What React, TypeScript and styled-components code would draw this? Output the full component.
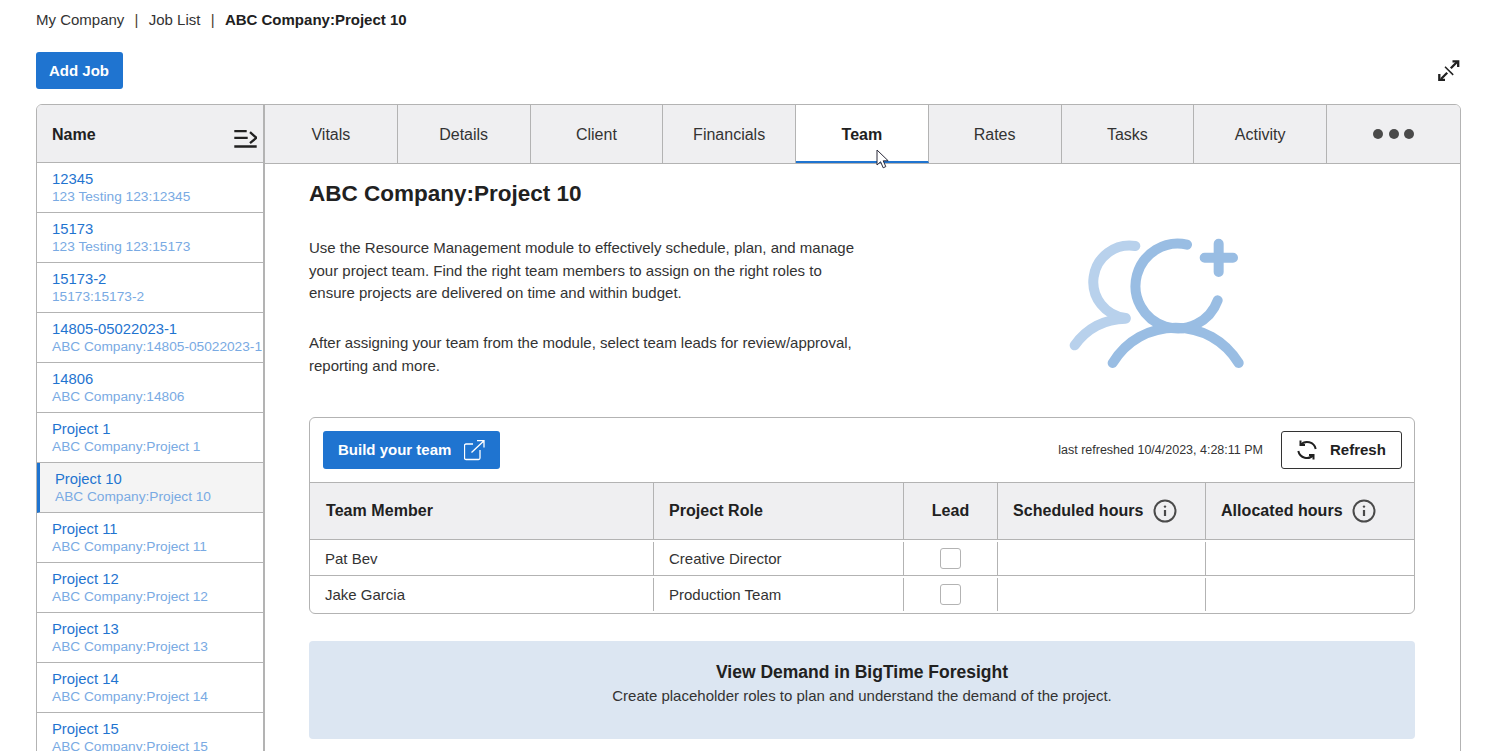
import * as React from 'react';
import styled, { createGlobalStyle } from 'styled-components';

const GlobalStyle = createGlobalStyle`
  html, body {
    margin: 0;
    padding: 0;
    background: #fff;
    overflow: hidden;
  }
  body {
    font-family: "Liberation Sans", Arial, sans-serif;
    color: #212121;
  }
`;

const Page = styled.div`
  width: 1500px;
  height: 751px;
  overflow: hidden;
  padding: 0 39px 0 36px;
  box-sizing: border-box;
`;

const Breadcrumbs = styled.div`
  height: 52px;
  padding-top: 11px;
  box-sizing: border-box;
  font-size: 15px;
  line-height: 18px;
  display: flex;
  color: #333;
`;

const Crumb = styled.span<{ $current?: boolean }>`
  font-weight: ${p => (p.$current ? 700 : 400)};
  color: ${p => (p.$current ? '#212121' : '#333')};
`;

const CrumbDivider = styled.span`
  margin: 0 10.250px;
  color: #4a4030;
`;

const ActionBar = styled.div`
  height: 52px;
  display: flex;
  justify-content: space-between;
  align-items: flex-start;
`;

const PrimaryButton = styled.button`
  height: 37px;
  padding: 0 14px 0 13px;
  display: flex;
  align-items: center;
  background: #1f74d0;
  border: 0;
  border-radius: 3px;
  color: #fff;
  font-family: inherit;
  font-size: 15px;
  font-weight: 700;
`;

const ExpandButton = styled.div`
  width: 24px;
  height: 24px;
  margin: 7px 0 0;
`;

const Panel = styled.div`
  width: 1425px;
  height: 760px;
  box-sizing: border-box;
  display: flex;
  border: 1px solid #b3b3b3;
  border-radius: 6px;
  overflow: hidden;
`;

const Sidebar = styled.div`
  width: 228px;
  flex: none;
  border-right: 2px solid #b3b3b3;
  box-sizing: border-box;
`;

const SidebarHead = styled.div`
  height: 58px;
  padding: 2px 6px 0 15px;
  box-sizing: border-box;
  display: flex;
  justify-content: space-between;
  align-items: center;
  background: #efeff1;
  border-bottom: 1px solid #b3b3b3;
  font-size: 16px;
  font-weight: 700;
`;

const CollapseIcon = styled.svg`
  margin-top: 8px;
`;

const JobRow = styled.div<{ $selected?: boolean }>`
  height: 50px;
  box-sizing: border-box;
  padding: 8px 0 0 15px;
  border-bottom: 1px solid #b3b3b3;
  border-left: ${p => (p.$selected ? '3px solid #1f74d0' : '0')};
  background: ${p => (p.$selected ? '#f4f4f4' : '#fff')};
  white-space: nowrap;
  overflow: hidden;
`;

const JobName = styled.div`
  color: #1f74d0;
  font-size: 14.800px;
  line-height: 17px;
`;

const JobPath = styled.div`
  color: #79aae3;
  font-size: 13.700px;
  line-height: 17px;
`;

const Main = styled.div`
  flex: 1;
  min-width: 0;
  position: relative;
`;

const Tabs = styled.div`
  height: 59px;
  display: flex;
  box-sizing: border-box;
  border-bottom: 1px solid #b3b3b3;
  background: #efeff1;
`;

const Tab = styled.div<{ $active?: boolean }>`
  flex: 0 0 132.750px;
  box-sizing: border-box;
  padding-top: 2px;
  display: flex;
  align-items: center;
  justify-content: center;
  border-right: 1px solid #b3b3b3;
  font-size: 16px;
  color: #333;
  &:last-child {
    flex: 1;
    border-right: 0;
    padding-top: 0;
  }
  ${p =>
    p.$active &&
    `
    background: #fff;
    color: #212121;
    font-weight: 700;
    border-bottom: 2px solid #1f74d0;
    padding-top: 4px;
  `}
`;

const Dot = styled.span`
  width: 10px;
  height: 10px;
  margin: 0 2.600px;
  border-radius: 50%;
  background: #4a4a4a;
`;

const Cursor = styled.svg`
  position: absolute;
  left: 611px;
  top: 44px;
`;

const Content = styled.div`
  padding: 14px 45px 0 44px;
`;

const Title = styled.h1`
  margin: 0;
  font-size: 22.500px;
  line-height: 31px;
  font-weight: 700;
  color: #212121;
`;

const Intro = styled.div`
  margin-top: 28px;
  display: flex;
  align-items: flex-start;
`;

const IntroText = styled.div`
  width: 555px;
  flex: none;
`;

const Paragraph = styled.p`
  margin: 0 0 27.500px;
  font-size: 15px;
  line-height: 22.500px;
  color: #333;
  &:last-child {
    margin-bottom: 0;
  }
`;

const Illustration = styled.svg`
  flex: none;
  margin-left: 204px;
`;

const TeamCard = styled.div`
  margin-top: 40px;
  border: 1px solid #b3b3b3;
  border-radius: 6px;
  overflow: hidden;
`;

const Toolbar = styled.div`
  height: 65px;
  box-sizing: border-box;
  padding: 0 12px 0 13px;
  display: flex;
  align-items: center;
  border-bottom: 1px solid #b3b3b3;
`;

const BuildLabel = styled.span`
  margin-bottom: 1px;
`;

const BuildButton = styled(PrimaryButton)`
  height: 38px;
  padding: 0 15px;
  gap: 13px;
`;

const RefreshedAt = styled.span`
  margin-left: auto;
  font-size: 12.500px;
  color: #333;
`;

const RefreshButton = styled.button`
  margin-left: 18px;
  width: 121px;
  height: 38px;
  padding: 0 0 0 15px;
  box-sizing: border-box;
  display: flex;
  align-items: center;
  gap: 13px;
  background: #fff;
  border: 1px solid #333;
  border-radius: 3px;
  color: #212121;
  font-family: inherit;
  font-size: 15px;
  font-weight: 700;
`;

const columns = '343px 250px 94px 208px 1fr';

const HeaderRow = styled.div`
  display: grid;
  grid-template-columns: ${columns};
  height: 57px;
  box-sizing: border-box;
  background: #efeff1;
  border-bottom: 1px solid #b3b3b3;
`;

const HeaderCell = styled.div<{ $center?: boolean }>`
  display: flex;
  align-items: center;
  justify-content: ${p => (p.$center ? 'center' : 'flex-start')};
  gap: 9px;
  padding: 0 15px;
  font-size: 16px;
  letter-spacing: 0.050px;
  font-weight: 700;
  color: #212121;
  &:not(:first-child) {
    border-left: 1px solid #b3b3b3;
  }
  &:first-child {
    padding-left: 16px;
  }
`;

const BodyRow = styled.div`
  display: grid;
  grid-template-columns: ${columns};
  height: 36px;
  box-sizing: border-box;
  border-bottom: 1px solid #b3b3b3;
  &:last-child {
    height: 37px;
    border-bottom: 0;
  }
`;

const BodyCell = styled.div<{ $center?: boolean }>`
  display: flex;
  align-items: center;
  justify-content: ${p => (p.$center ? 'center' : 'flex-start')};
  margin-top: 2px;
  padding: 0 15px;
  font-size: 15px;
  color: #333;
  &:not(:first-child) {
    border-left: 1px solid #b3b3b3;
  }
  ${BodyRow}:last-child & {
    margin-bottom: 2px;
  }
`;

const LeadCheck = styled.span`
  width: 21px;
  height: 21px;
  box-sizing: border-box;
  border: 1px solid #b3b3b3;
  border-radius: 3px;
  background: #fff;
  margin-top: -1px;
`;

const Banner = styled.div`
  margin-top: 27px;
  height: 98px;
  padding-top: 20px;
  box-sizing: border-box;
  background: #dce6f2;
  border-radius: 4px;
  text-align: center;
`;

const BannerTitle = styled.div`
  font-size: 17.500px;
  line-height: 22px;
  font-weight: 700;
  color: #212121;
`;

const BannerText = styled.div`
  font-size: 15px;
  line-height: 24px;
  color: #333;
  margin-top: 1px;
`;

const jobs = [
  { name: '12345', path: '123 Testing 123:12345' },
  { name: '15173', path: '123 Testing 123:15173' },
  { name: '15173-2', path: '15173:15173-2' },
  { name: '14805-05022023-1', path: 'ABC Company:14805-05022023-1' },
  { name: '14806', path: 'ABC Company:14806' },
  { name: 'Project 1', path: 'ABC Company:Project 1' },
  { name: 'Project 10', path: 'ABC Company:Project 10', selected: true },
  { name: 'Project 11', path: 'ABC Company:Project 11' },
  { name: 'Project 12', path: 'ABC Company:Project 12' },
  { name: 'Project 13', path: 'ABC Company:Project 13' },
  { name: 'Project 14', path: 'ABC Company:Project 14' },
  { name: 'Project 15', path: 'ABC Company:Project 15' },
];

const tabs = ['Vitals', 'Details', 'Client', 'Financials', 'Team', 'Rates', 'Tasks', 'Activity'];

const InfoIcon = () => (
  <svg width="24" height="24" viewBox="0 0 24 24" fill="none" stroke="#4a4a4a">
    <circle cx="12" cy="12" r="10.500" strokeWidth="2" />
    <path d="M12 11v6" strokeWidth="2.200" />
    <circle cx="12" cy="7.600" r="1.200" fill="#4a4a4a" stroke="none" />
  </svg>
);

const App = () => {
  return (
    <Page>
      <GlobalStyle />
      <Breadcrumbs>
        <Crumb>My Company</Crumb>
        <CrumbDivider>|</CrumbDivider>
        <Crumb>Job List</Crumb>
        <CrumbDivider>|</CrumbDivider>
        <Crumb $current>ABC Company:Project 10</Crumb>
      </Breadcrumbs>
      <ActionBar>
        <PrimaryButton>Add Job</PrimaryButton>
        <ExpandButton>
          <svg width="24" height="24" viewBox="0 0 24 24" fill="none" stroke="#212121" strokeWidth="2.300">
            <path d="M20 3L13.800 9.200M4 20L10.200 13.800" />
            <path d="M15.500 2.300H21.200V8M2.300 15V20.800H8" />
            <path d="M8 7.700L16.200 15.900" strokeWidth="1.500" />
          </svg>
        </ExpandButton>
      </ActionBar>
      <Panel>
        <Sidebar>
          <SidebarHead>
            Name
            <CollapseIcon width="24" height="20" viewBox="0 0 24 20" fill="none" stroke="#212121" strokeWidth="2.300">
              <path d="M1.300 2.200H13.700M1.300 8.800H14.700M1.300 17.500H23.700" />
              <path d="M17 3.200L23.400 8.800L17 14.200" />
            </CollapseIcon>
          </SidebarHead>
          {jobs.map(job => (
            <JobRow key={job.name} $selected={job.selected}>
              <JobName>{job.name}</JobName>
              <JobPath>{job.path}</JobPath>
            </JobRow>
          ))}
        </Sidebar>
        <Main>
          <Tabs>
            {tabs.map(tab => (
              <Tab key={tab} $active={tab === 'Team'}>
                {tab}
              </Tab>
            ))}
            <Tab>
              <Dot />
              <Dot />
              <Dot />
            </Tab>
          </Tabs>
          <Cursor width="14" height="20" viewBox="0 0 14 20">
            <path
              d="M1 1v15l3.600-3.200 2.600 6 2.600-1.200-2.600-5.800h5z"
              fill="#fff"
              stroke="#2a2a3a"
              strokeWidth="1"
              strokeLinejoin="round"
            />
          </Cursor>
          <Content>
            <Title>ABC Company:Project 10</Title>
            <Intro>
              <IntroText>
                <Paragraph>
                  Use the Resource Management module to effectively schedule, plan, and manage
                  <br />
                  your project team. Find the right team members to assign on the right roles to
                  <br />
                  ensure projects are delivered on time and within budget.
                </Paragraph>
                <Paragraph>
                  After assigning your team from the module, select team leads for review/approval,
                  <br />
                  reporting and more.
                </Paragraph>
              </IntroText>
              <Illustration width="177" height="134" viewBox="115 590 531 402" fill="none" strokeWidth="30" strokeLinecap="round">
                <g stroke="#b8d1ec">
                  <path d="M317 617A109 109 0 1 0 288 833" />
                  <path d="M288 835C225 835 170 865 135 915" />
                </g>
                <g stroke="#99bde3">
                  <path d="M472 613A127 127 0 1 0 564 780" />
                  <path d="M249 968C290 900 360 862 438 862C516 862 585 900 627 968" />
                  <path d="M567 610V695M525 652H610" />
                </g>
              </Illustration>
            </Intro>
            <TeamCard>
              <Toolbar>
                <BuildButton>
                  <BuildLabel>Build your team</BuildLabel>
                  <svg width="21" height="21" viewBox="0 0 21 21" fill="none" stroke="#fff" strokeWidth="1.300">
                    <path d="M9 4H2a1.500 1.500 0 0 0-1.500 1.500V18A1.500 1.500 0 0 0 2 19.500H14.500A1.500 1.500 0 0 0 16 18V10" />
                    <path d="M7.500 12.500L20 0.700M13 0.700H20V7.500" />
                  </svg>
                </BuildButton>
                <RefreshedAt>last refreshed 10/4/2023, 4:28:11 PM</RefreshedAt>
                <RefreshButton>
                  <svg width="20" height="20" viewBox="0 0 20 20" fill="none" stroke="#212121" strokeWidth="2">
                    <path d="M18.700 9A8.800 8.800 0 0 0 3.500 5" />
                    <path d="M1.300 11A8.800 8.800 0 0 0 16.500 15" />
                    <path d="M3.500 0.500V5H8M16.500 19.500V15H12" />
                  </svg>
                  <BuildLabel>Refresh</BuildLabel>
                </RefreshButton>
              </Toolbar>
              <HeaderRow>
                <HeaderCell>Team Member</HeaderCell>
                <HeaderCell>Project Role</HeaderCell>
                <HeaderCell $center>Lead</HeaderCell>
                <HeaderCell>
                  Scheduled hours
                  <InfoIcon />
                </HeaderCell>
                <HeaderCell>
                  Allocated hours
                  <InfoIcon />
                </HeaderCell>
              </HeaderRow>
              <BodyRow>
                <BodyCell>Pat Bev</BodyCell>
                <BodyCell>Creative Director</BodyCell>
                <BodyCell $center>
                  <LeadCheck />
                </BodyCell>
                <BodyCell />
                <BodyCell />
              </BodyRow>
              <BodyRow>
                <BodyCell>Jake Garcia</BodyCell>
                <BodyCell>Production Team</BodyCell>
                <BodyCell $center>
                  <LeadCheck />
                </BodyCell>
                <BodyCell />
                <BodyCell />
              </BodyRow>
            </TeamCard>
            <Banner>
              <BannerTitle>View Demand in BigTime Foresight</BannerTitle>
              <BannerText>Create placeholder roles to plan and understand the demand of the project.</BannerText>
            </Banner>
          </Content>
        </Main>
      </Panel>
    </Page>
  );
};

export default App;
